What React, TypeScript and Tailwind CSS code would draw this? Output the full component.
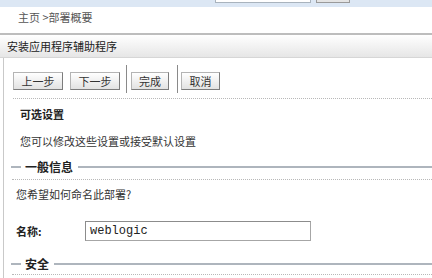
const cjk = { fontFamily: '"Noto Sans CJK SC", "Noto Sans", sans-serif' };

const Btn = ({ label, w }: { label: string; w: string }) => (
  <button
    className={`${w} mt-[7px] h-[18px] flex items-center justify-center border border-[#b4b4b4] border-r-[#7c7c7c] border-b-[#7c7c7c] bg-gradient-to-b from-white to-[#e2e2e2] text-[11px] leading-[12px] text-[#333]`}
  >
    {label}
  </button>
);

const Sep = () => <div className="w-px h-[28px] bg-[#8a8a8a]" />;

const Legend = ({ title }: { title: string }) => (
  <div className="flex items-center pl-[7px]">
    <div className="w-[10px] h-[2px] bg-[#aeb5bd]" />
    <span className="ml-[4px] text-[12px] leading-[14px] font-bold text-[#222]">{title}</span>
    <div className="ml-[5px] flex-1 h-[2px] bg-[#aeb5bd]" />
  </div>
);

export default function App() {
  return (
    <div className="w-[432px] h-[278px] overflow-hidden bg-white text-[#333]" style={cjk}>
      {/* top bar */}
      <div className="h-[7px] bg-[#dce7f4] flex items-end pb-[4px] overflow-hidden">
        <div className="ml-[215px] w-[96px] h-[18px] shrink-0 bg-white border border-[#a9b3bd]" />
        <div className="ml-[5px] w-[34px] h-[18px] shrink-0 bg-[#e4e4e4] border border-[#9a9a9a]" />
      </div>

      {/* breadcrumb */}
      <div className="h-[26px] pt-[4px] pl-[18px] text-[11px] leading-[12px] text-[#555]">
        主页 &gt;部署概要
      </div>

      {/* header */}
      <div className="h-[25px] border-t-2 border-[#bdbdbd] border-b border-b-[#d6d6d6] bg-gradient-to-b from-white to-[#e6e6e6] flex items-center pl-[7px] text-[11px] leading-[12px] text-[#222]">
        安装应用程序辅助程序
      </div>

      {/* body */}
      <div className="ml-[3px] border-l border-[#c9c9c9] h-[300px]">
        <div className="flex items-start pt-[7px] pl-[9px]">
          <Btn label="上一步" w="w-[50px]" />
          <div className="ml-[7px]"><Btn label="下一步" w="w-[50px]" /></div>
          <div className="ml-[6px]"><Sep /></div>
          <div className="ml-[4px]"><Btn label="完成" w="w-[38px]" /></div>
          <div className="ml-[8px]"><Sep /></div>
          <div className="ml-[3px]"><Btn label="取消" w="w-[39px]" /></div>
        </div>
        <div className="mt-[5px] ml-[9px] border-t border-dotted border-[#b8b8b8]" />

        <div className="mt-[9px] pl-[16px] text-[11px] leading-[12px] font-bold text-[#222]">可选设置</div>
        <div className="mt-[15px] pl-[16px] text-[11px] leading-[12px] text-[#333]">您可以修改这些设置或接受默认设置</div>

        <div className="mt-[13px]"><Legend title="一般信息" /></div>
        <div className="mt-[5px] ml-[8px] border-t border-dotted border-[#b8b8b8]" />

        <div className="mt-[8px] pl-[12px] text-[11px] leading-[12px] text-[#333]">您希望如何命名此部署?</div>

        <div className="mt-[21px] flex items-center pl-[12px]">
          <div className="w-[69px] text-[11px] leading-[12px] font-bold text-[#222]">名称:</div>
          <div
            className="w-[226px] h-[20px] border border-[#a6a6a6] border-t-[#8c8c8c] border-l-[#8c8c8c] flex items-center pl-[4px] text-[12px] text-[#222]"
            style={{ fontFamily: '"Liberation Mono", monospace' }}
          >
            weblogic
          </div>
        </div>

        <div className="mt-[16px]"><Legend title="安全" /></div>
        <div className="mt-[3px] ml-[8px] border-t border-dotted border-[#b8b8b8]" />
      </div>
    </div>
  );
}
